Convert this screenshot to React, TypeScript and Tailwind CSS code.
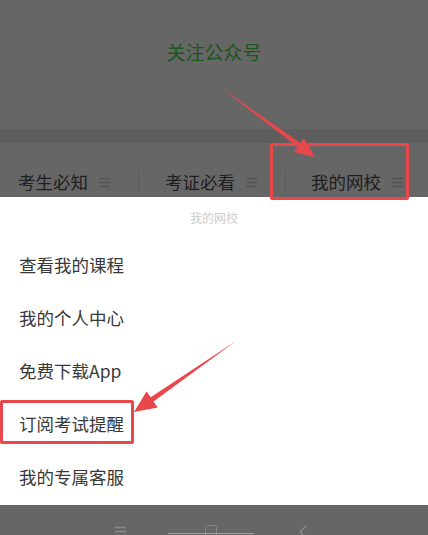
const cjk = { fontFamily: '"Noto Sans CJK SC", "Noto Sans", sans-serif' };

function MenuIcon({ className }: { className?: string }) {
  return (
    <svg width="11" height="11" viewBox="0 0 11 11" className={className}>
      <path d="M0 1.5h11M0 5.5h11M0 9.5h11" stroke="currentColor" strokeWidth="1.3" />
    </svg>
  );
}

function Tab({ label, pl, w }: { label: string; pl: string; w: string }) {
  return (
    <div className={`flex h-full items-center pt-[24px] ${pl} ${w}`}>
      <span className="text-[17.5px] text-[#1e1e1e]">{label}</span>
      <MenuIcon className="ml-[11px] text-[#555555]" />
    </div>
  );
}

const items = ["查看我的课程", "我的个人中心", "免费下载App", "订阅考试提醒", "我的专属客服"];

export default function App() {
  return (
    <div className="relative h-[535px] w-[428px] overflow-hidden bg-[#666666]" style={cjk}>
      <div className="flex h-[129px] items-center justify-center pb-[24px]">
        <span className="text-[19px] text-[#1b561b]">关注公众号</span>
      </div>
      <div className="h-[14px] bg-[#5e5e5e]" />
      <div className="flex h-[54px] items-center">
        <Tab label="考生必知" pl="pl-[18px]" w="w-[138px]" />
        <div className="mt-[24px] h-[20px] w-px bg-[#595959]" />
        <Tab label="考证必看" pl="pl-[26px]" w="w-[146px]" />
        <div className="mt-[24px] h-[20px] w-px bg-[#595959]" />
        <Tab label="我的网校" pl="pl-[25px]" w="w-[142px]" />
      </div>
      <div className="h-[308px] bg-white">
        <div className="flex h-[42px] items-center justify-center text-[12px] text-[#cccccc]">我的网校</div>
        {items.map((t) => (
          <div key={t} className="flex h-[53px] items-center pl-[19px] text-[17.5px] text-[#383838]">
            {t}
          </div>
        ))}
      </div>
      <div className="relative h-[30px] bg-[#666666]">
        <MenuIcon className="absolute left-[115px] top-[21px] text-[#8a8a8a]" />
        <div className="absolute left-[205px] top-[20px] h-[14px] w-[12px] rounded-[3px] border-[1.5px] border-[#8a8a8a]" />
        <div className="absolute left-[168px] top-[28px] h-px w-[86px] bg-[#a0a0a0]" />
        <svg className="absolute left-[298px] top-[20px]" width="10" height="12" viewBox="0 0 10 12">
          <path d="M8 1L2 7l6 6" fill="none" stroke="#8a8a8a" strokeWidth="1.4" />
        </svg>
      </div>

      {/* annotations */}
      <div className="absolute left-[270px] top-[143px] h-[57px] w-[139px] rounded-[2px] border-[3px] border-[#e8474b]" />
      <div className="absolute left-0 top-[400px] h-[44px] w-[134px] rounded-[2px] border-[3px] border-[#e8474b]" />
      <svg className="pointer-events-none absolute left-0 top-0" width="428" height="535" viewBox="0 0 428 535">
        <polygon
          points="220,87 300.5,143 303.7,138 315,157 294,152 297.5,147"
          fill="#e8474b"
        />
        <polygon
          points="236,341 150.7,397.3 146.5,391.5 134,412 157.8,407.5 153.5,401.5"
          fill="#e8474b"
        />
      </svg>
    </div>
  );
}
